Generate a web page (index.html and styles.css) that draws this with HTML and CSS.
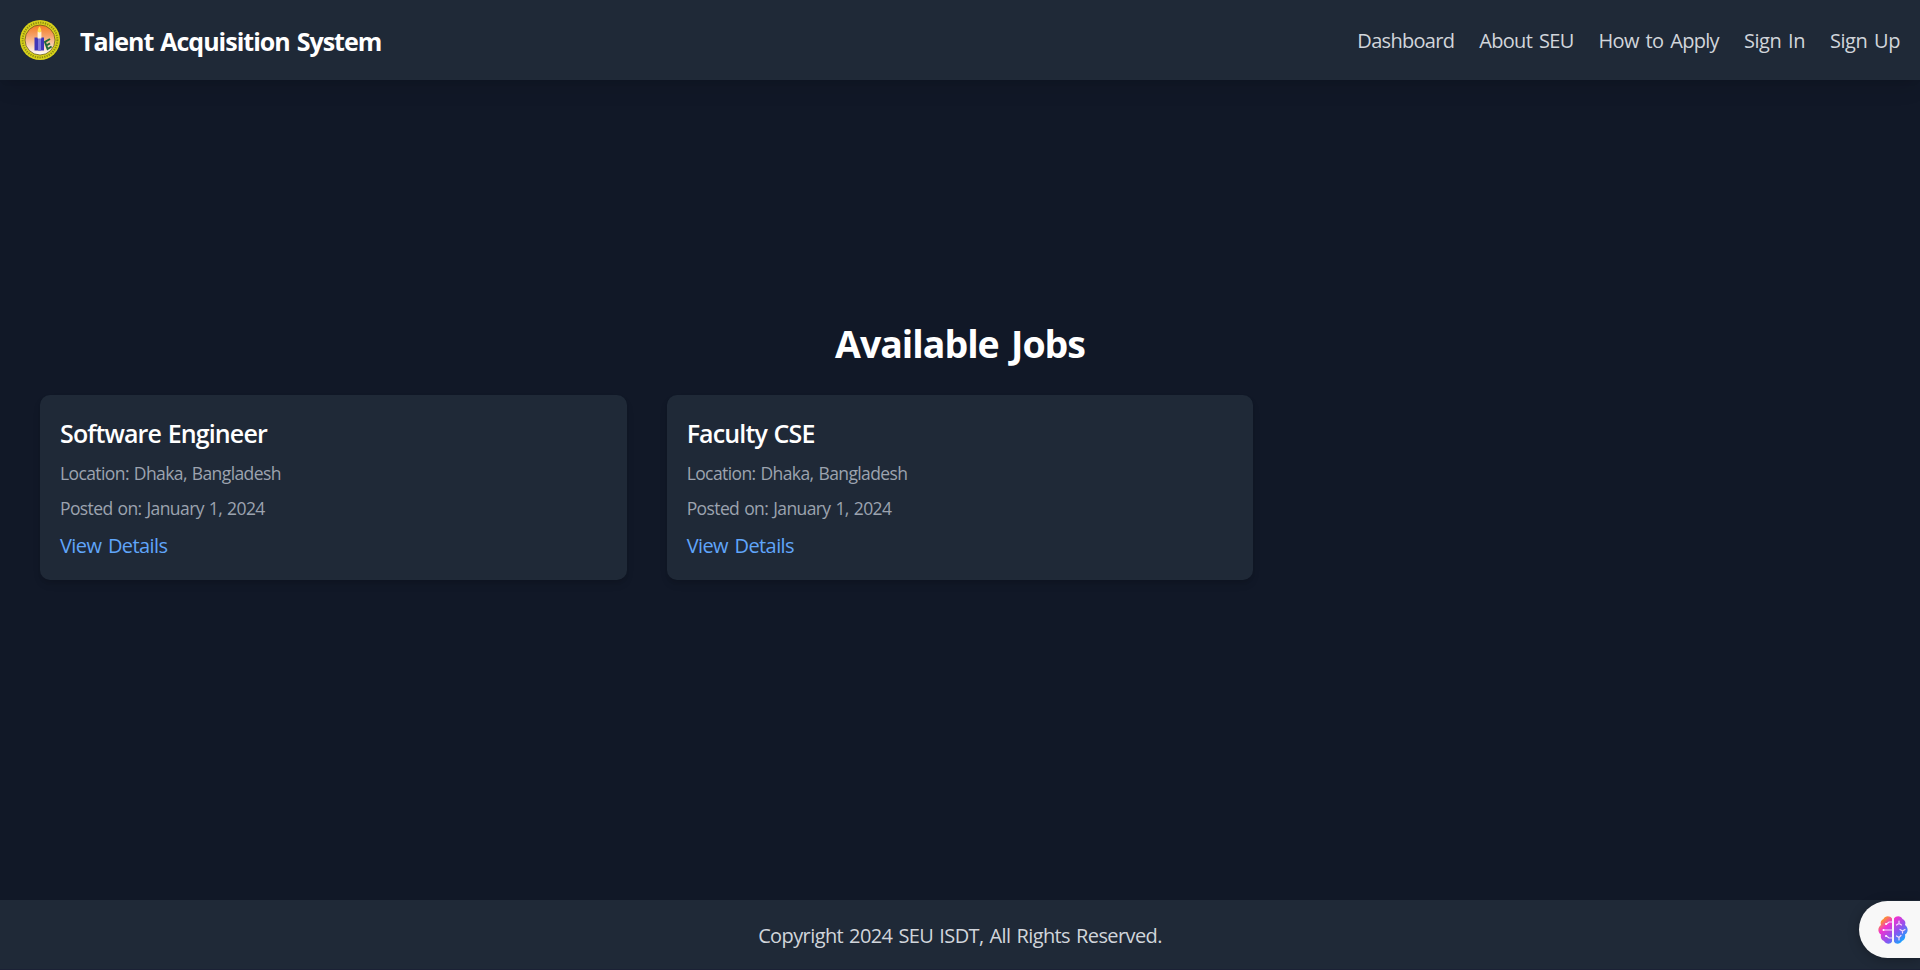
FILE: index.html
```html
<!DOCTYPE html>
<html lang="en">
<head>
<meta charset="utf-8">
<title>Talent Acquisition System</title>
<link rel="stylesheet" href="styles.css">
</head>
<body>
<header class="header">
  <div class="brand">
    <svg class="logo" viewBox="0 0 40 40" aria-hidden="true">
      <defs><linearGradient id="sky" x1="0" y1="0" x2="0" y2="1"><stop offset="0" stop-color="#f47a20"/><stop offset=".35" stop-color="#f5a066"/><stop offset="1" stop-color="#ffffff"/></linearGradient></defs>
      <circle cx="20" cy="20" r="20" fill="#d8d21a"/>
      <circle cx="20" cy="20" r="17.4" fill="none" stroke="#5c5a12" stroke-width="2" stroke-dasharray="1.3 1.1" opacity=".6"/>
      <circle cx="20" cy="20" r="15" fill="url(#sky)" stroke="#6b5a1c" stroke-width=".8"/>
      <path d="M14.500 17.500h3.500v13h-3.500zM21 17.500h3v13h-3z" fill="#3f36b8"/>
      <path d="M18 17h3v14h-3z" fill="#7d77dc"/>
      <path d="M17.600 11.500h3.800v7h-3.800z" fill="#fff1d8"/>
      <path d="M19.500 6.500c2.400 3 2.300 6 0 6s-2.400-3 0-6z" fill="#ffe14a"/>
      <path d="M30 19l-5 3 2.600 7 4-2.500M26.300 25.500l3.700-2.200" fill="none" stroke="#1f6b3a" stroke-width="2"/>
    </svg>
    <span class="brand-name">Talent Acquisition System</span>
  </div>
  <nav class="nav">
    <a class="nav-link">Dashboard</a>
    <a class="nav-link">About SEU</a>
    <a class="nav-link">How to Apply</a>
    <a class="nav-link nav-auth">Sign In</a>
    <a class="nav-link nav-auth">Sign Up</a>
  </nav>
</header>
<main class="main">
  <h1 class="heading">Available Jobs</h1>
  <div class="jobs">
    <article class="card">
      <h2 class="job-title">Software Engineer</h2>
      <p class="meta">Location: Dhaka, Bangladesh</p>
      <p class="meta">Posted on: January 1, 2024</p>
      <a class="details">View Details</a>
    </article>
    <article class="card">
      <h2 class="job-title">Faculty CSE</h2>
      <p class="meta">Location: Dhaka, Bangladesh</p>
      <p class="meta">Posted on: January 1, 2024</p>
      <a class="details">View Details</a>
    </article>
  </div>
</main>
<footer class="footer"><p class="copyright">Copyright 2024 SEU ISDT, All Rights Reserved.</p></footer>
<div class="assistant">
  <svg class="brain" viewBox="0 0 30 28" aria-hidden="true">
    <defs><linearGradient id="brain" x1="0" y1="0" x2="1" y2="1"><stop offset=".12" stop-color="#ff9a1f"/><stop offset=".32" stop-color="#f032d0"/><stop offset=".6" stop-color="#8a55f0"/><stop offset=".88" stop-color="#12a8ff"/></linearGradient></defs>
    <path fill="url(#brain)" d="M14 2.500C12-.5 7-.4 5.500 3 3 4 2 6.500 3 9-.5 11.500-.5 16.500 3 18.500c-.8 3 .5 5.500 3 6.500 2 3.500 6.500 3.600 8 .5zM16 2.500C18-.5 23-.4 24.500 3c2.500 1 3.500 3.500 2.500 6 3.500 2.500 3.500 7.500 0 9.500.8 3-.5 5.500-3 6.500-2 3.500-6.500 3.600-8 .5z"/>
    <path fill="none" stroke="#f6d8fb" stroke-width="1.200" stroke-linecap="round" d="M14 6h-3L8.500 8M14 14H5.500M14 22h-3l-2.500-2M18.500 9l2.500-1.500L23.500 9M21 7.500V5M22 13.500l2.500 1.500 2.500-1.500M24.500 15v2M18.500 20l2.500 1.500 2-2M21 21.500v2.500"/>
    <circle cx="8" cy="8" r="1" fill="#fff"/><circle cx="5.500" cy="14" r="1" fill="#fff"/><circle cx="8" cy="20" r="1" fill="#fff"/>
  </svg>
</div>
</body>
</html>
```
FILE: styles.css
```css
* { box-sizing: border-box; margin: 0; padding: 0; }
body {
  display: flex;
  flex-direction: column;
  height: 970px;
  overflow: hidden;
  background: #111827;
  color: #fff;
  font-family: "Open Sans", "Noto Sans", sans-serif;
  font-size: 20px;
  line-height: 30px;
}
.header {
  display: flex;
  align-items: center;
  justify-content: space-between;
  height: 80px;
  padding: 0 20px;
  background: #1f2937;
  box-shadow: 0 12px 19px -4px rgba(0, 0, 0, .1), 0 5px 7px -5px rgba(0, 0, 0, .1);
}
.brand { display: flex; align-items: center; gap: 20px; }
.logo { width: 40px; height: 40px; }
.brand-name { padding-top: 2px; font-size: 25px; line-height: 35px; font-weight: 700; letter-spacing: -1px; word-spacing: 1.5px; white-space: nowrap; }
.nav { display: flex; gap: 25px; padding-top: 2px; }
.nav-link { color: #d1d5db; letter-spacing: -.7px; word-spacing: 2.4px; white-space: nowrap; }
.nav-auth { letter-spacing: -.45px; word-spacing: 2px; }
.main { flex: 1; display: flex; flex-direction: column; justify-content: center; padding: 0 40px 82px; }
.heading { margin-bottom: 26px; text-align: center; font-size: 37.5px; line-height: 50px; font-weight: 700; letter-spacing: -1px; word-spacing: 3.5px; }
.jobs { display: grid; grid-template-columns: repeat(3, 1fr); gap: 40px; }
.card { height: 185px; padding: 21px 20px 19px; border-radius: 10px; background: #1f2937; box-shadow: 0 5px 8px -1px rgba(0, 0, 0, .1), 0 3px 5px -2px rgba(0, 0, 0, .1); }
.job-title { margin-bottom: 10px; font-size: 25px; line-height: 35px; font-weight: 600; letter-spacing: -.87px; word-spacing: 1px; }
.meta { margin-bottom: 10px; color: #9ca3af; font-size: 17.5px; line-height: 25px; letter-spacing: -.6px; word-spacing: 1px; }
.details { color: #60a5fa; letter-spacing: -.6px; word-spacing: 2px; }
.footer { display: flex; justify-content: center; height: 70px; padding-top: 21px; background: #1f2937; border-bottom: 1px solid #1b2135; }
.copyright { color: #d1d5db; letter-spacing: -.6px; word-spacing: 1.4px; }
.assistant { position: absolute; right: 0; top: 901px; display: flex; align-items: center; width: 61px; height: 57px; padding-left: 19px; border-radius: 29px 0 0 29px; background: #f8f8f8; box-shadow: 0 2px 12px rgba(0, 0, 0, .25); }
.brain { width: 30px; height: 28px; }
```
